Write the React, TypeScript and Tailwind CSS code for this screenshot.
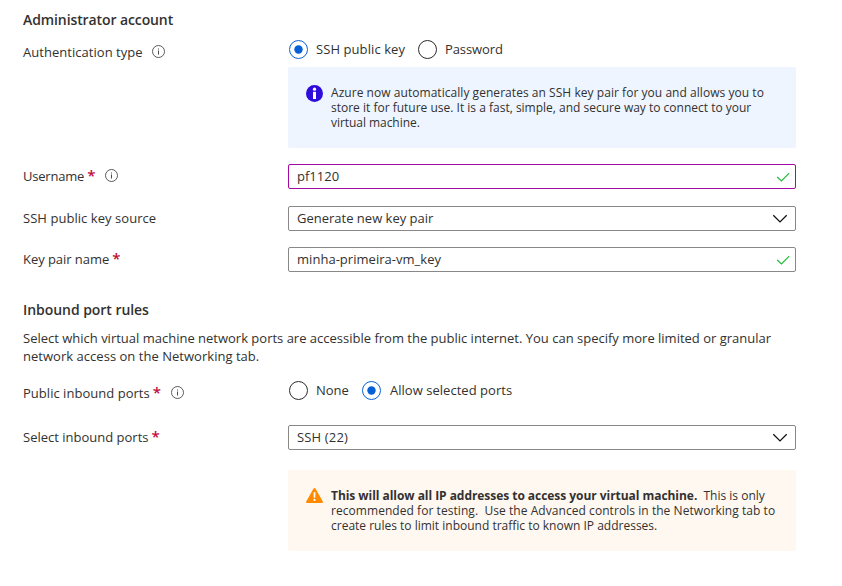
import type { ReactNode } from "react";

function InfoIcon() {
  return (
    <svg className="h-[14px] w-[14px] shrink-0" viewBox="0 0 14 14" fill="none">
      <circle cx="6.5" cy="6.5" r="6" stroke="#4a4a4a" strokeWidth="0.9" />
      <path d="M6.5 5.5V9.5" stroke="#4a4a4a" strokeWidth="1" />
      <path d="M6.5 3.5V4.5" stroke="#4a4a4a" strokeWidth="1" />
    </svg>
  );
}

function Star() {
  return <span className="ml-[3px] pb-[2px] text-[15px] leading-[18px] font-semibold text-[#c00a38]">*</span>;
}

function Check() {
  return (
    <svg className="h-[10px] w-[14px] shrink-0" viewBox="0 0 14 10" fill="none">
      <path d="M1.2 5L5.4 9L13.2 1.1" stroke="#22bb38" strokeWidth="1.2" />
    </svg>
  );
}

function Chevron() {
  return (
    <svg className="-mt-px h-[9px] w-[16px] shrink-0" viewBox="0 0 16 9" fill="none">
      <path d="M1.3 1.3L8 7.9L14.7 1.3" stroke="#111" strokeWidth="1.3" />
    </svg>
  );
}

function Radio({ checked = false }: { checked?: boolean }) {
  return (
    <svg className="h-[19px] w-[19px] shrink-0" viewBox="0 0 19 19" fill="none">
      <circle cx="9.5" cy="9.5" r="9" stroke={checked ? "#0a62d6" : "#2b2b2b"} />
      {checked && <circle cx="9.5" cy="9.5" r="4.2" fill="#0560d8" />}
    </svg>
  );
}

function Row({ label, className, children }: { label: ReactNode; className: string; children: ReactNode }) {
  return (
    <div className={"flex " + className}>
      <div className="flex h-[23px] w-[265px] shrink-0 items-center">{label}</div>
      {children}
    </div>
  );
}

function Field({ className, icon, children }: { className: string; icon: ReactNode; children: ReactNode }) {
  return (
    <div className={"flex h-[25px] w-[508px] items-center justify-between rounded-[2px] border bg-white pl-2 " + className}>
      <span className="pb-[2px]">{children}</span>
      {icon}
    </div>
  );
}

export default function App() {
  return (
    <main className="flex h-[586px] w-[842px] flex-col overflow-hidden whitespace-nowrap bg-white pl-[23px] font-['Open_Sans',sans-serif] text-[13px] leading-[18px] text-[#323130]">
      <h2 className="mt-[11px] h-[18px] text-[14px] font-semibold tracking-[-0.1px]">Administrator account</h2>
      <Row
        className="mt-[11px] h-[27px]"
        label={
          <>
            <span className="tracking-[0.04px]">Authentication type</span>
            <span className="ml-[9px]"><InfoIcon /></span>
          </>
        }
      >
        <div className="-mt-px ml-px flex h-[21px] items-center">
          <Radio checked />
          <span className="ml-[8px] w-[102px] pb-px tracking-[0.08px]">SSH public key</span>
          <Radio />
          <span className="ml-[8px] pb-px tracking-[-0.1px]">Password</span>
        </div>
      </Row>
      <section className="ml-[265px] flex h-[81px] w-[508px] rounded-[2px] bg-[#eef5ff] pl-[18px] pt-[18px]">
        <svg className="h-[17px] w-[17px] shrink-0" viewBox="0 0 17 17">
          <circle cx="8.5" cy="8.5" r="8.5" fill="#2f0bdc" />
          <circle cx="8.5" cy="4.2" r="1.6" fill="#fff" />
          <path d="M7 6.8H10V14H7Z" fill="#fff" />
        </svg>
        <div className="ml-[8px] text-[12px] leading-[15px]">
          <p className="tracking-[0.045px]">Azure now automatically generates an SSH key pair for you and allows you to</p>
          <p>store it for future use. It is a fast, simple, and secure way to connect to your</p>
          <p className="tracking-[-0.05px]">virtual machine.</p>
        </div>
      </section>
      <Row
        className="mt-[16px] h-[25px]"
        label={
          <>
            <span className="tracking-[-0.2px]">Username</span>
            <Star />
            <span className="ml-[10px]"><InfoIcon /></span>
          </>
        }
      >
        <Field className="border-[#a30aa3] pr-[5px]" icon={<Check />}>pf1120</Field>
      </Row>
      <Row className="mt-[17px] h-[25px]" label={<span className="tracking-[0.05px]">SSH public key source</span>}>
        <Field className="border-[#8a8886] pr-[7px]" icon={<Chevron />}>Generate new key pair</Field>
      </Row>
      <Row className="mt-[16px] h-[25px]" label={<><span className="tracking-[-0.05px]">Key pair name</span><Star /></>}>
        <Field className="border-[#8a8886] pr-[5px]" icon={<Check />}>
          <span className="tracking-[0.03px]">minha-primeira-vm_key</span>
        </Field>
      </Row>
      <h2 className="mt-[29px] h-[18px] text-[14px] font-semibold tracking-[-0.05px]">Inbound port rules</h2>
      <div className="mt-[10px] h-[36px]">
        <p className="tracking-[-0.002px]">Select which virtual machine network ports are accessible from the public internet. You can specify more limited or granular</p>
        <p className="tracking-[0.03px]">network access on the Networking tab.</p>
      </div>
      <Row
        className="mt-[16px] h-[44px]"
        label={
          <>
            <span className="tracking-[0.03px]">Public inbound ports</span>
            <Star />
            <span className="ml-[10px]"><InfoIcon /></span>
          </>
        }
      >
        <div className="ml-px flex h-[19px] items-center">
          <Radio />
          <span className="ml-[8px] w-[46px] pb-px">None</span>
          <Radio checked />
          <span className="ml-[9px] pb-px tracking-[0.03px]">Allow selected ports</span>
        </div>
      </Row>
      <Row className="h-[25px]" label={<><span>Select inbound ports</span><Star /></>}>
        <Field className="border-[#8a8886] pr-[7px]" icon={<Chevron />}>
          <span className="tracking-[0.15px]">SSH (22)</span>
        </Field>
      </Row>
      <section className="ml-[265px] mt-[20px] flex h-[81px] w-[508px] rounded-[2px] bg-[#fff8f0] pl-[18px] pt-[18px]">
        <svg className="h-[16px] w-[17px] shrink-0" viewBox="0 0 17 16">
          <path d="M7.4 0.7Q8.5 -0.7 9.6 0.7L16.8 13.6Q17.4 15.1 16 15.1H1Q-0.4 15.1 0.2 13.6Z" fill="#ff8c00" />
          <path d="M7.5 4.2H9.5L9.2 9.7H7.8Z" fill="#fff" />
          <circle cx="8.5" cy="11.9" r="1.1" fill="#fff" />
        </svg>
        <div className="ml-[8px] text-[12px] leading-[15px]">
          <p><b className="tracking-[-0.045px]">This will allow all IP addresses to access your virtual machine.</b><span>&nbsp; This is only</span></p>
          <p className="tracking-[0.055px]">recommended for testing.&nbsp; Use the Advanced controls in the Networking tab to</p>
          <p>create rules to limit inbound traffic to known IP addresses.</p>
        </div>
      </section>
    </main>
  );
}
